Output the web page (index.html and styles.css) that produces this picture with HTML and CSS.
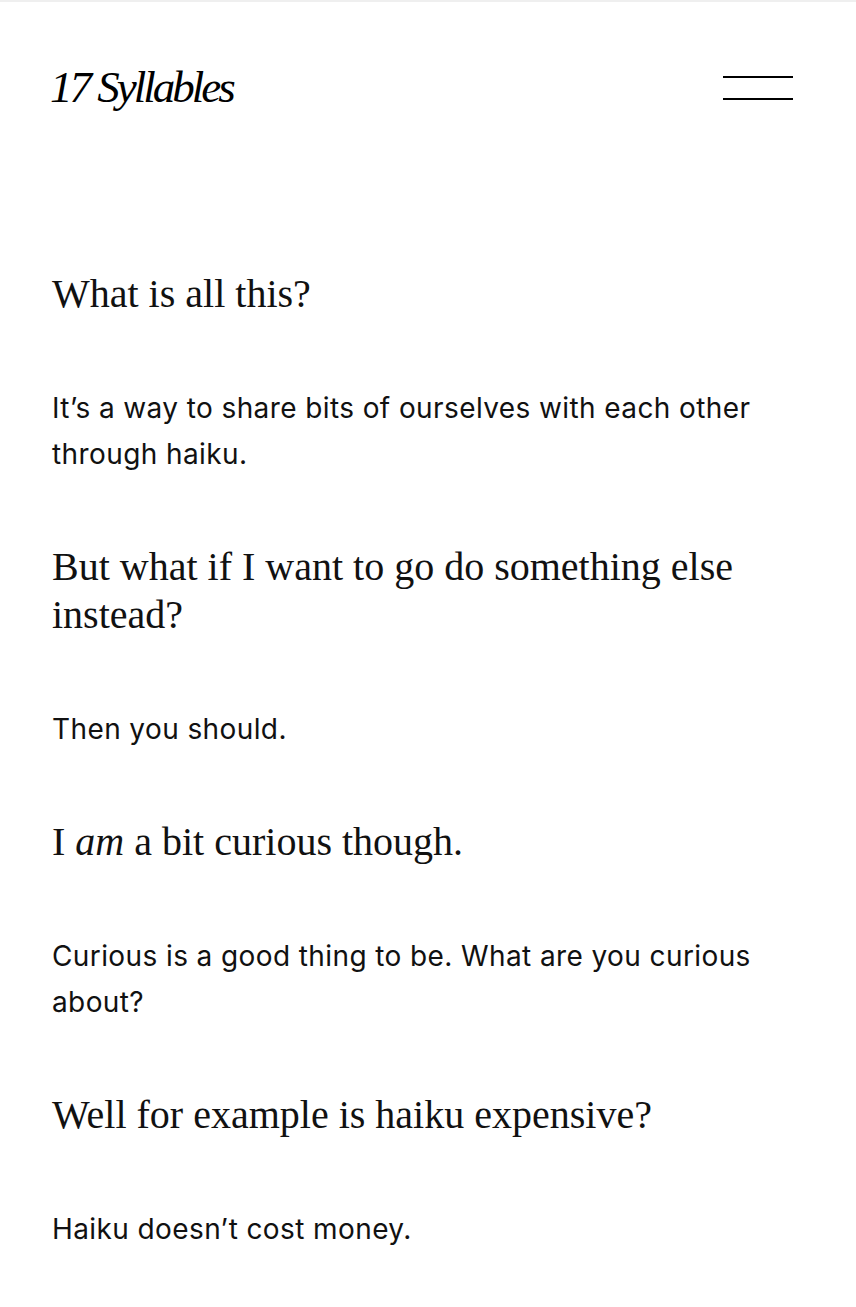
FILE: index.html
```html
<!DOCTYPE html>
<html lang="en">
  <head>
    <title>17 Syllables</title>
    <meta charset="UTF-8" />
    <meta name="viewport" content="width=device-width, initial-scale=1" />
    <link rel="stylesheet" href="styles.css">
  </head>

  <body>
    <header class="site-header">
      <a class="logo" href="#">17 Syllables</a>
      <button class="menu-toggle" aria-label="Menu">
        <span class="menu-line"></span>
        <span class="menu-line"></span>
      </button>
    </header>

    <main class="faq">
      <h2 class="question">What is all this?</h2>
      <p class="answer">It’s a way to share bits of ourselves with each other through haiku.</p>

      <h2 class="question">But what if I want to go do something else instead?</h2>
      <p class="answer">Then you should.</p>

      <h2 class="question">I <em>am</em> a bit curious though.</h2>
      <p class="answer">Curious is a good thing to be. What are you curious about?</p>

      <h2 class="question">Well for example is haiku expensive?</h2>
      <p class="answer">Haiku doesn’t cost money.</p>
    </main>
  </body>
</html>
```

FILE: styles.css
```css
body {
  margin: 0;
  border-top: 2px solid #efefef;
  background: #fff;
  color: #111;
  --page-gutter: 52px;
}

.site-header {
  display: flex;
  justify-content: space-between;
  align-items: flex-start;
  padding: 63px 63px 0 50px;
}

.logo {
  display: inline-block;
  font-family: "Liberation Serif", serif;
  font-style: italic;
  font-size: 45px;
  line-height: 45px;
  letter-spacing: -3px;
  color: #000;
  text-decoration: none;
}

.menu-toggle {
  display: flex;
  flex-direction: column;
  justify-content: space-between;
  width: 70px;
  height: 24px;
  margin-top: 11px;
  padding: 0;
  border: 0;
  background: none;
}

.menu-line {
  display: block;
  width: 100%;
  height: 2px;
  background: #000;
}

.faq {
  display: flex;
  flex-direction: column;
  padding: 160px var(--page-gutter) 0;
}

.question {
  margin: 0 0 67px;
  font-family: "Liberation Serif", serif;
  font-weight: normal;
  font-size: 40px;
  line-height: 48px;
}

.question em {
  font-style: italic;
}

.answer {
  margin: 0 0 66px;
  font-family: Inter, sans-serif;
  font-size: 28px;
  line-height: 46px;
  letter-spacing: 0.4px;
}
```
